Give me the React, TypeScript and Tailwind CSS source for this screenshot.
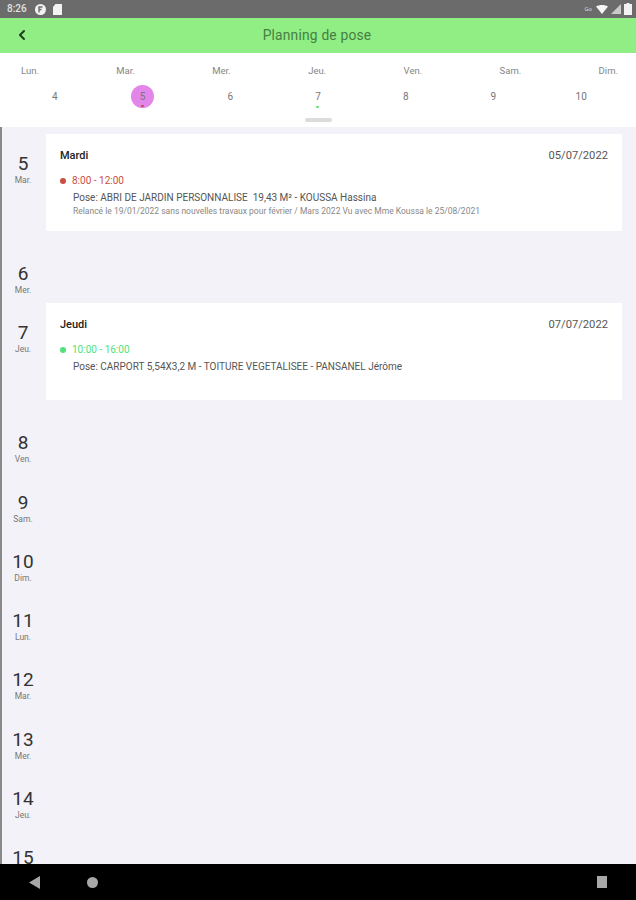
import { ChevronLeft } from 'lucide-react';

const week = [
  { label: 'Lun.', num: 4 },
  { label: 'Mar.', num: 5, active: true },
  { label: 'Mer.', num: 6 },
  { label: 'Jeu.', num: 7, dot: true },
  { label: 'Ven.', num: 8 },
  { label: 'Sam.', num: 9 },
  { label: 'Dim.', num: 10 },
];

const StatusBar = () => (
  <div className="h-[18px] shrink-0 bg-[#6b6b6b] flex items-center justify-between pl-[7px] pr-[4px] text-white">
    <div className="flex items-center gap-[7px]">
      <span className="text-[10px] leading-none font-medium text-[#e0e0e0] w-[20px]">8:26</span>
      <svg width="11" height="11" viewBox="0 0 11 11" className="ml-[1px]">
        <circle cx="5.5" cy="5.5" r="5.5" fill="#f2f2f2" />
        <path d="M4 8.5V3h3.5M4 5.5h2.5" stroke="#6b6b6b" strokeWidth="1.4" fill="none" />
      </svg>
      <svg width="9" height="11" viewBox="0 0 9 11">
        <path d="M2.5 0H9v11H0V3z" fill="#f2f2f2" />
      </svg>
    </div>
    <div className="flex items-center gap-[3px]">
      <span className="text-[6px] leading-none text-[#d8d8d8] mr-[1px]">Go</span>
      <svg width="12" height="9" viewBox="0 0 12 9">
        <path d="M0 1.5C3.5-.5 8.5-.5 12 1.5L6 9z" fill="#f5f5f5" />
      </svg>
      <svg width="10" height="10" viewBox="0 0 10 10">
        <path d="M10 0v10H0z" fill="#c9c9c9" />
      </svg>
      <svg width="8" height="12" viewBox="0 0 8 12">
        <path d="M2.5 0h3v1H8v11H0V1h2.5z" fill="#f2f2f2" />
      </svg>
    </div>
  </div>
);

const Header = () => (
  <div className="relative h-[35px] shrink-0 bg-[#90ee84] flex items-center justify-center">
    <ChevronLeft className="absolute left-[14px] top-[9px] w-[16px] h-[16px] text-[#1f3d1f]" strokeWidth={3} />
    <span className="text-[13.8px] tracking-[0.2px] text-[#457f42] -ml-[2px]">Planning de pose</span>
  </div>
);

const WeekStrip = () => (
  <div className="relative h-[74px] shrink-0 bg-white">
    <div className="flex justify-between pl-[21px] pr-[18px] pt-[12px] text-[9.5px] leading-[12px] text-[#858585]">
      {week.map((d) => (
        <span key={d.label}>{d.label}</span>
      ))}
    </div>
    <div className="grid grid-cols-7 mx-[11px] mt-[8px]">
      {week.map((d) => (
        <div key={d.num} className="flex justify-center">
          <div className={`relative w-[23px] h-[23px] rounded-full flex items-center justify-center text-[10px] text-[#777] ${d.active ? 'bg-[#e286ea]' : ''}`}>
            {d.num}
            {d.active && <span className="absolute bottom-[1px] w-[3px] h-[2px] rounded-full bg-[#c0503a]" />}
            {d.dot && <span className="absolute bottom-[0px] w-[3px] h-[2px] rounded-full bg-[#5fe07a]" />}
          </div>
        </div>
      ))}
    </div>
    <div className="absolute left-[305px] bottom-[5px] w-[27px] h-[4px] rounded-full bg-[#dcdcdc]" />
  </div>
);

const DayLabel = ({ num, label }: { num: number; label: string }) => (
  <div className="w-[46px] shrink-0 flex flex-col items-center pt-[25px] text-[#333]">
    <span className="text-[19px] leading-[24px]">{num}</span>
    <span className="text-[8.5px] leading-[10px] -mt-[1px] text-[#777]">{label}</span>
  </div>
);

const EventCard = ({ title, date, color, time, line, note }: { title: string; date: string; color: string; time: string; line: string; note?: string }) => (
  <div className="mt-[7px] w-[576px] h-[96.5px] bg-white pl-[14px] pr-[14px] pt-[15px]">
    <div className="flex justify-between items-center text-[11px] leading-[14px]">
      <span className="font-medium text-[#222]">{title}</span>
      <span className="text-[#555] text-[11.2px]">{date}</span>
    </div>
    <div className={`flex items-center gap-[6px] mt-[12px] text-[10px] leading-[12px] ${color}`}>
      <span className="w-[6px] h-[6px] rounded-full bg-current" />
      <span>{time}</span>
    </div>
    <div className="pl-[13px] mt-[5px] text-[10px] leading-[12px] text-[#555] whitespace-pre">{line}</div>
    {note && <div className="pl-[13px] mt-[2px] text-[8.5px] leading-[10px] text-[#888] whitespace-pre">{note}</div>}
  </div>
);

const rows = [
  { num: 5, label: 'Mar.', event: { title: 'Mardi', date: '05/07/2022', color: 'text-[#c9503f]', time: '8:00 - 12:00', line: 'Pose: ABRI DE JARDIN PERSONNALISE  19,43 M² - KOUSSA Hassina', note: 'Relancé le 19/01/2022 sans nouvelles travaux pour février / Mars 2022 Vu avec Mme Koussa le 25/08/2021' } },
  { num: 6, label: 'Mer.' },
  { num: 7, label: 'Jeu.', event: { title: 'Jeudi', date: '07/07/2022', color: 'text-[#4fe37c]', time: '10:00 - 16:00', line: 'Pose: CARPORT 5,54X3,2 M - TOITURE VEGETALISEE - PANSANEL Jérôme' } },
  { num: 8, label: 'Ven.' },
  { num: 9, label: 'Sam.' },
  { num: 10, label: 'Dim.' },
  { num: 11, label: 'Lun.' },
  { num: 12, label: 'Mar.' },
  { num: 13, label: 'Mer.' },
  { num: 14, label: 'Jeu.' },
  { num: 15, label: 'Ven.' },
];

const NavBar = () => (
  <div className="h-[36px] shrink-0 bg-black flex items-center justify-between pl-[29px] pr-[29px]">
    <div className="flex items-center gap-[47px]">
      <svg width="11" height="13" viewBox="0 0 11 13">
        <path d="M11 0v13L0 6.5z" fill="#a8a8a8" />
      </svg>
      <span className="w-[11px] h-[11px] rounded-full bg-[#a8a8a8]" />
    </div>
    <span className="w-[10px] h-[12px] bg-[#a8a8a8]" />
  </div>
);

export default function App() {
  return (
    <div className="w-[636px] h-[900px] flex flex-col overflow-hidden bg-[#f2f2f8] font-['Roboto',sans-serif]">
      <StatusBar />
      <Header />
      <WeekStrip />
      <div className="flex-1 min-h-0 overflow-hidden flex">
        <div className="w-[2px] shrink-0 bg-[#8a8a8a]" />
        <div className="flex-1 -ml-[2px]">
          {rows.map((r) => (
            <div key={r.num} className={`flex ${r.event ? 'h-[110px]' : 'h-[59.3px]'}`}>
              <DayLabel num={r.num} label={r.label} />
              {r.event && <EventCard {...r.event} />}
            </div>
          ))}
        </div>
      </div>
      <NavBar />
    </div>
  );
}
